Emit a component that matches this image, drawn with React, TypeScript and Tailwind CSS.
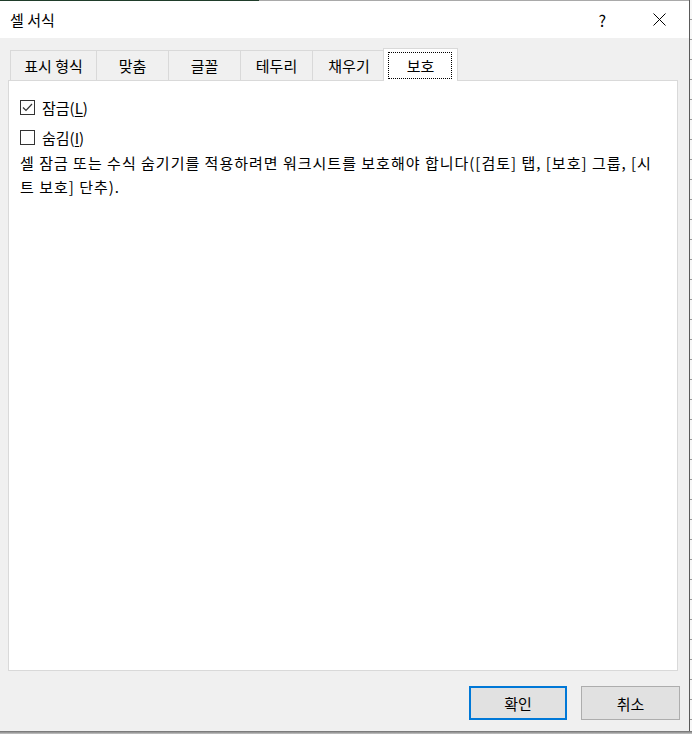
import React from "react";

const TABS = [
  { label: "표시 형식", w: "w-[86px]" },
  { label: "맞춤", w: "w-[72px]" },
  { label: "글꼴", w: "w-[72px]" },
  { label: "테두리", w: "w-[72px]" },
  { label: "채우기", w: "w-[73px]" },
];

const FONT = { fontFamily: "'Noto Sans CJK KR', 'Noto Sans', sans-serif" };

function CheckBox({ checked }: { checked?: boolean }) {
  return (
    <div className="w-[15px] h-[15px] border border-[#333333] bg-white flex items-center justify-center shrink-0">
      {checked && (
        <svg width="13" height="13" viewBox="0 0 13 13">
          <polyline points="2,6.5 5,9.5 11,3" fill="none" stroke="#333333" strokeWidth="1.2" />
        </svg>
      )}
    </div>
  );
}

export default function App() {
  return (
    <div className="w-[692px] h-[734px] overflow-hidden flex flex-col bg-[#d0d0d0] text-black text-[15px]" style={FONT}>
      <div className="flex h-[731px]">
        {/* Dialog */}
        <div className="w-[690px] h-full flex flex-col bg-[#f0f0f0] border-r border-[#5a5a5a]">
          {/* Title bar */}
          <div className="h-[38px] bg-white flex flex-col shrink-0">
            <div className="flex h-px">
              <div className="w-[259px] bg-[#1f3d2a]" />
              <div className="flex-1 bg-[#a9a9a9]" />
            </div>
            <div className="flex-1 flex items-center">
              <span className="pl-[10px] leading-none">셀 서식</span>
              <span className="ml-auto mr-[47px] leading-none text-[16px]">?</span>
              <svg className="mr-[23px]" width="13" height="13" viewBox="0 0 13 13">
                <path d="M0.5 0.5 L12.5 12.5 M12.5 0.5 L0.5 12.5" stroke="#000" strokeWidth="1" />
              </svg>
            </div>
          </div>

          {/* Tabs */}
          <div className="pt-[10px] pl-[10px] flex items-end h-[42px] shrink-0">
            {TABS.map((t) => (
              <div
                key={t.label}
                className={`${t.w} h-[30px] border-t border-l border-[#d9d9d9] flex items-center justify-center leading-none`}
              >
                {t.label}
              </div>
            ))}
            <div className="relative z-10 w-[75px] h-[33px] -ml-[2px] -mb-px bg-white border border-b-0 border-[#d9d9d9] flex items-center justify-center leading-none">
              보호
              <div className="absolute left-[4px] right-[5px] top-[3px] bottom-[2px] border border-dotted border-black" />
            </div>
          </div>

          {/* Content */}
          <div className="ml-[8px] w-[670px] h-[591px] shrink-0 bg-white border border-[#d9d9d9] pt-[11px] pl-[11px]">
            <div className="h-[30px] flex items-center gap-[7px]">
              <CheckBox checked />
              <span className="leading-none">
                잠금(<span className="underline underline-offset-2">L</span>)
              </span>
            </div>
            <div className="h-[30px] flex items-center gap-[7px]">
              <CheckBox />
              <span className="leading-none">
                숨김(<span className="underline underline-offset-2">I</span>)
              </span>
            </div>
            <p className="leading-[24px] whitespace-nowrap -mt-px tracking-[1px]">
              셀 잠금 또는 수식 숨기기를 적용하려면 워크시트를 보호해야 합니다([검토] 탭, [보호] 그룹, [시
              <br />
              트 보호] 단추).
            </p>
          </div>

          {/* Buttons */}
          <div className="flex justify-end gap-[14px] pt-[15px] pr-[9px]">
            <button className="w-[98px] h-[34px] bg-[#e1e1e1] border-2 border-[#0078d7] leading-none">확인</button>
            <button className="w-[99px] h-[34px] bg-[#e1e1e1] border border-[#adadad] leading-none">취소</button>
          </div>
        </div>

        {/* Sheet behind */}
        <div className="flex-1 bg-[repeating-linear-gradient(to_bottom,#f7f7f7_0px,#f7f7f7_19px,#9a9a9a_19px,#9a9a9a_20px)]" />
      </div>
      <div className="h-[3px] bg-gradient-to-b from-[#6e6e6e] to-[#c8c8c8]" />
    </div>
  );
}
